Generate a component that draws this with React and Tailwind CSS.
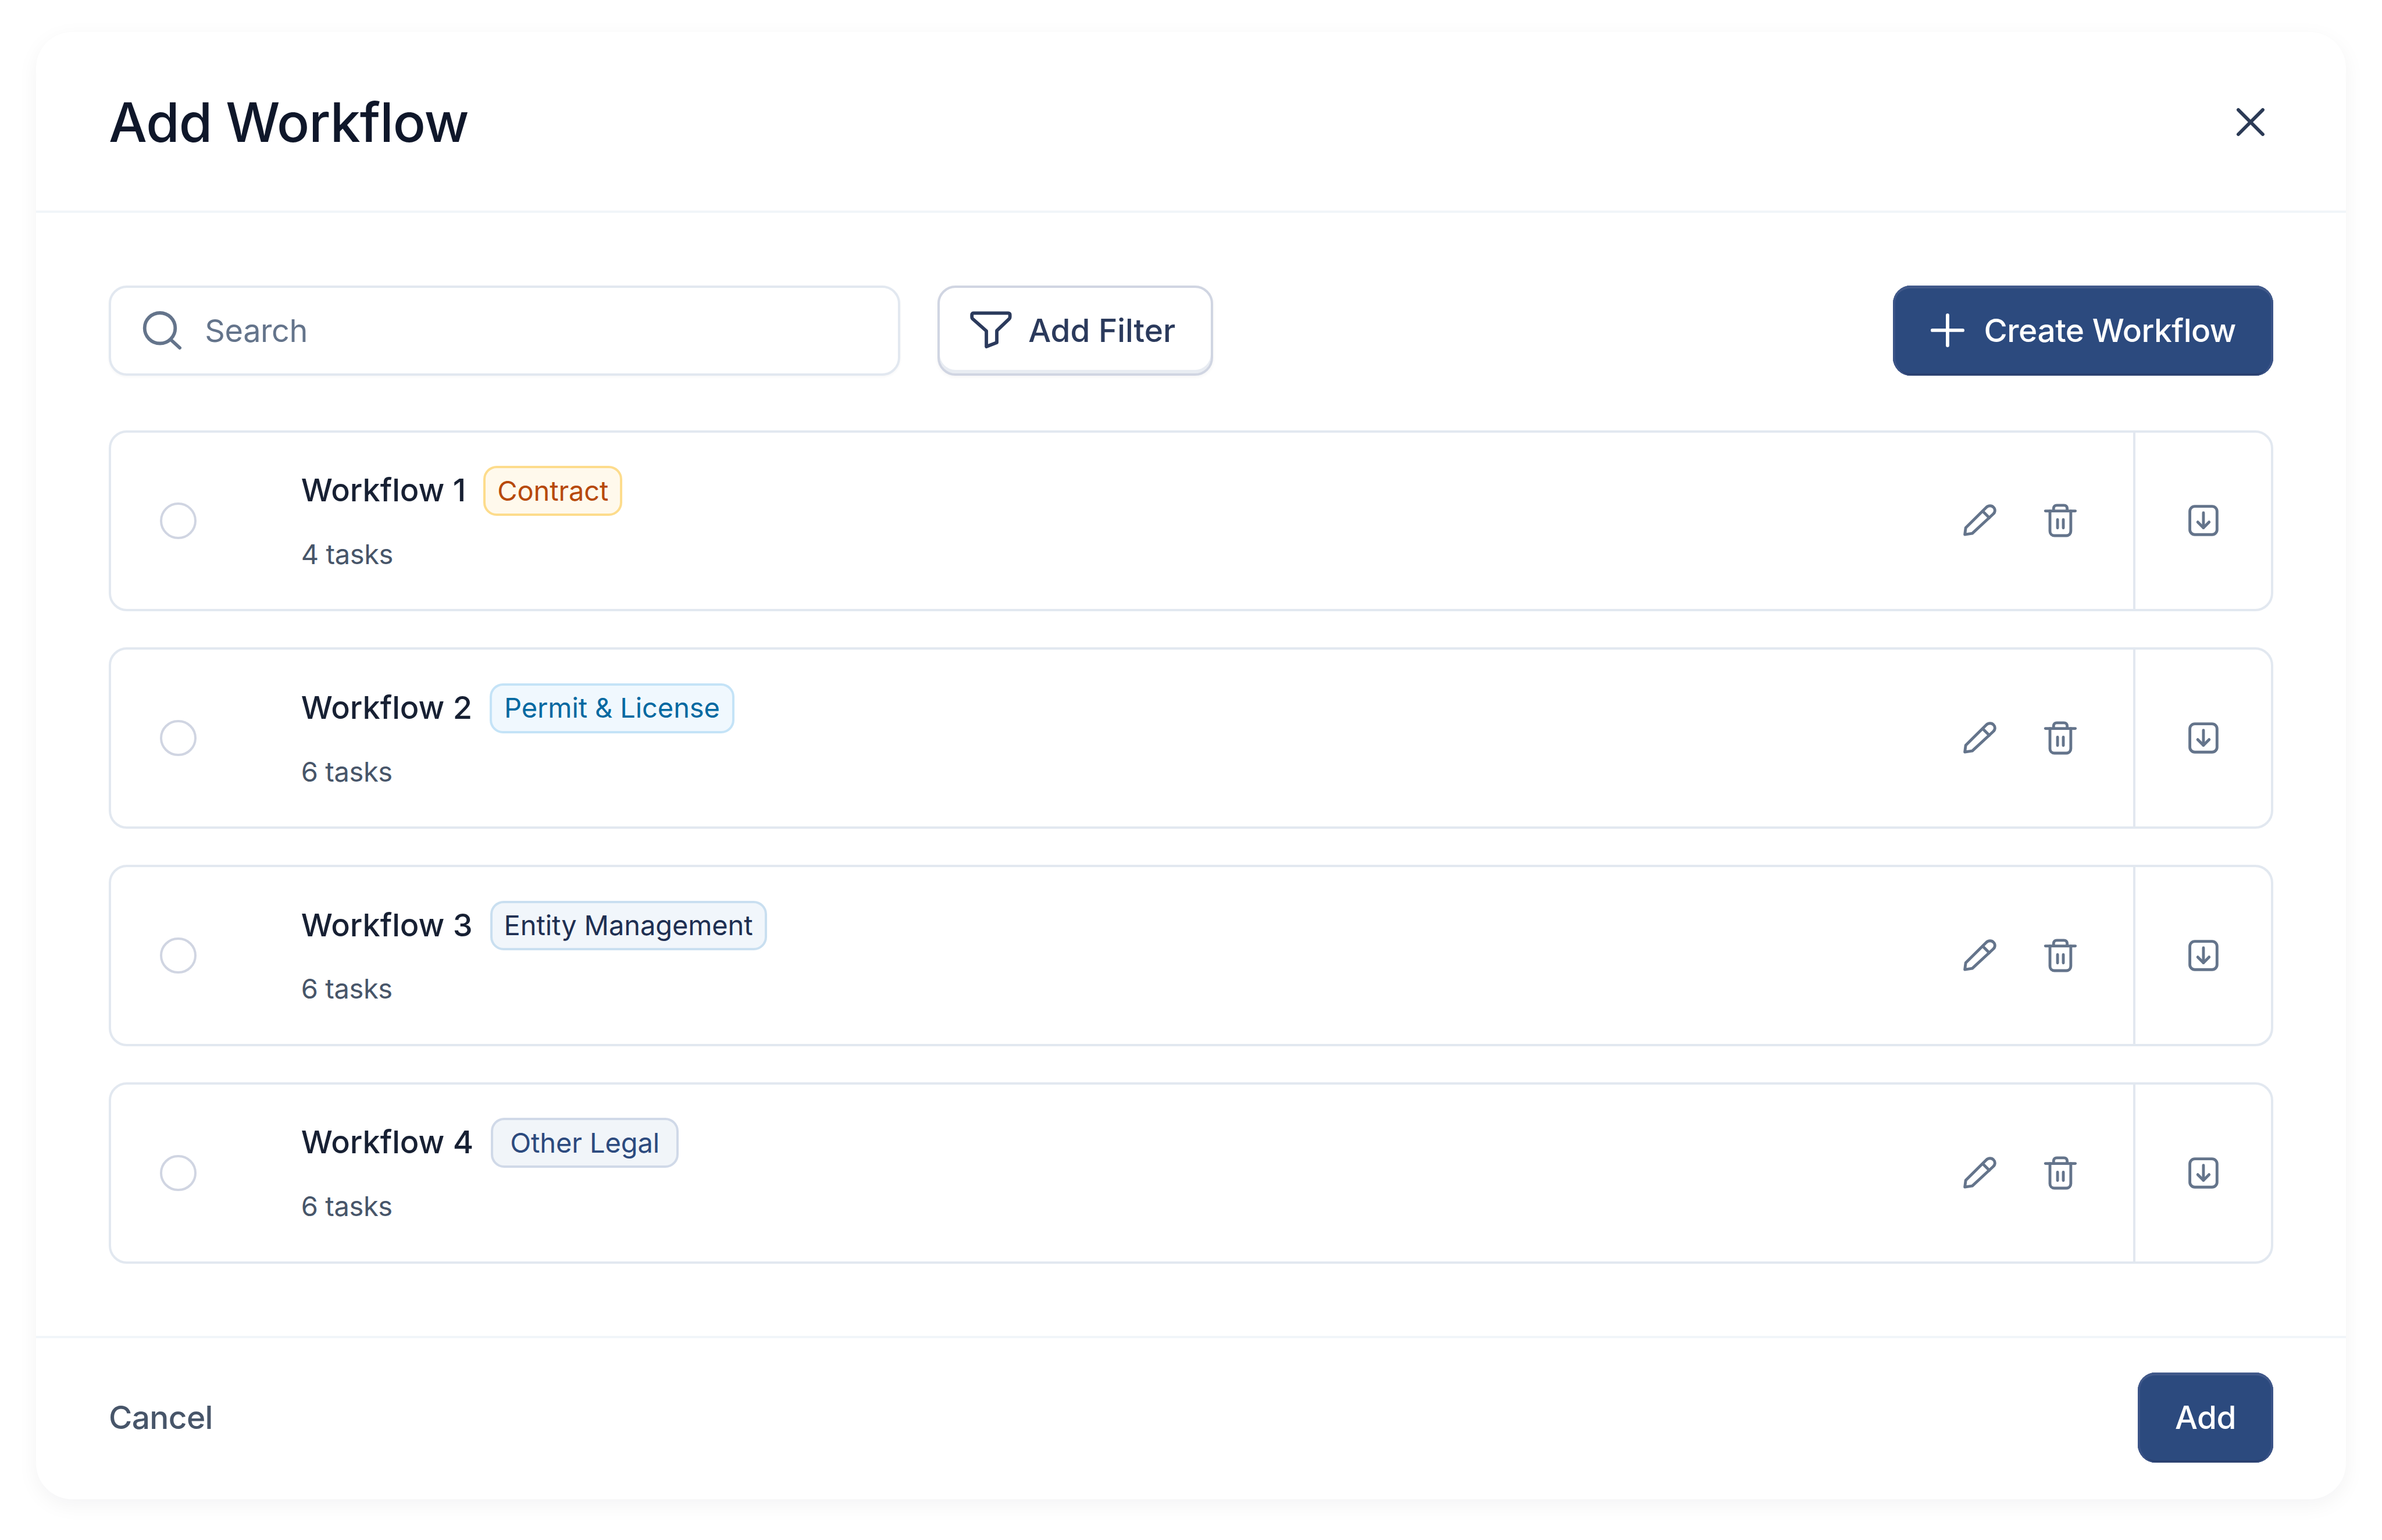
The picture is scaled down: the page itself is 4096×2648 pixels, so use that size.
import React from "react";

const rows = [
  {
    name: "Workflow 1",
    tasks: "4 tasks",
    tag: "Contract",
    tagClass: "px-[20px] bg-[#fff9ec] border-[#fddc8c] text-[#b7490a]",
  },
  {
    name: "Workflow 2",
    tasks: "6 tasks",
    tag: "Permit & License",
    tagClass: "px-[21px] bg-[#f0f8fe] border-[#c4e3f7] text-[#0369a1]",
  },
  {
    name: "Workflow 3",
    tasks: "6 tasks",
    tag: "Entity Management",
    tagClass: "px-[20px] bg-[#f1f6fb] border-[#c9dff0] text-[#1e2f52]",
  },
  {
    name: "Workflow 4",
    tasks: "6 tasks",
    tag: "Other Legal",
    tagClass: "px-[29px] bg-[#f1f5f9] border-[#d0d9e8] text-[#2c4a7e]",
  },
];

const Icon = ({ className, width = 1.25, children }) => (
  <svg
    viewBox="0 0 20 20"
    fill="none"
    stroke="currentColor"
    strokeWidth={width}
    strokeLinecap="round"
    strokeLinejoin="round"
    className={`w-[77.9px] h-[77.9px] shrink-0 ${className}`}
  >
    {children}
  </svg>
);

const WorkflowRow = ({ row }) => (
  <div className="flex h-[311.5px] items-center rounded-[31px] border-[4px] border-[#e2e8f0] bg-white">
    <div className="ml-[84.6px] h-[62.3px] w-[62.3px] shrink-0 rounded-full border-[4px] border-[#d0d5e2]" />
    <div className="ml-[180px] flex flex-1 flex-col">
      <div className="flex h-[85.7px] items-center gap-[30px]">
        <span className="mb-[3px] text-[54px] font-medium text-[#172033]">
          {row.name}
        </span>
        <span
          className={`flex h-[85.7px] items-center rounded-[23px] border-[4px] text-[47px] tracking-[-0.1px] ${row.tagClass}`}
        >
          {row.tag}
        </span>
      </div>
      <div className="mt-[25px] h-[78px] text-[47px] leading-[82px] tracking-[-0.4px] text-[#475569]">
        {row.tasks}
      </div>
    </div>
    <div className="flex items-center gap-[61px] pr-[86px] text-[#64748b]">
      <Icon>
        <path d="M3.5 16.2L3.9 13.2L12.9 4.3C13.9 3.3 15.4 3.3 16.2 4.2C17 5 17 6.3 16 7.2L6.8 15.7Z" />
        <path d="M11.4 5.9L14.3 8.8" />
      </Icon>
      <Icon>
        <path d="M3.4 5.8H16.6" />
        <path d="M7 5.8V4.7C7 3.8 7.6 3.3 8.4 3.3H11.6C12.4 3.3 13 3.8 13 4.7V5.8" />
        <path d="M5.4 5.8V14.7C5.4 15.9 6.2 16.7 7.4 16.7H12.6C13.8 16.7 14.6 15.9 14.6 14.7V5.8" />
        <path d="M8.75 9.6V13.3" />
        <path d="M11.3 9.6V13.3" />
      </Icon>
    </div>
    <div className="flex h-full w-[237.3px] shrink-0 items-center justify-center border-l-[4px] border-[#e2e8f0] text-[#64748b]">
      <Icon>
        <rect x="4" y="3.75" width="12" height="12.5" rx="2.2" />
        <path d="M10 6.6V13.2" />
        <path d="M7.5 10.7L10 13.2L12.5 10.7" />
      </Icon>
    </div>
  </div>
);

export default function App() {
  return (
    <div className="h-[2648px] w-[4096px] overflow-hidden bg-white pl-[62.3px] pt-[54.5px] font-[Inter,sans-serif]">
      <div className="flex h-[2523px] w-[3971.5px] flex-col rounded-[62px] bg-white shadow-[0_10px_36px_rgba(15,23,42,0.05)]">
        <div className="flex h-[311.5px] shrink-0 items-center justify-between border-b-[4px] border-[#f1f5f9] px-[124.6px] pt-[4px]">
          <h1 className="text-[93px] font-medium tracking-[-0.9px] text-[#0f172a]">
            Add Workflow
          </h1>
          <Icon width={1.5} className="text-[#2b3a55]">
            <path d="M4.6 4.6L15.4 15.4" />
            <path d="M15.4 4.6L4.6 15.4" />
          </Icon>
        </div>

        <div className="flex flex-1 flex-col px-[124.6px] pt-[124.6px]">
          <div className="flex h-[155.7px] items-center">
            <div className="flex h-full w-[1360.8px] items-center rounded-[31px] border-[4px] border-[#e2e8f0] pl-[48.5px] shadow-[0_2px_4px_rgba(15,23,42,0.04)]">
              <Icon width={1.5} className="text-[#64748b]">
                <circle cx="9.25" cy="9.05" r="6.75" />
                <path d="M14.2 14.3L18 17.75" />
              </Icon>
              <span className="ml-[35px] text-[54px] tracking-[-0.4px] text-[#64748b]">
                Search
              </span>
            </div>
            <button className="ml-[64.2px] flex h-full w-[474px] items-center rounded-[31px] border-[4px] border-[#d0d5e2] bg-white pl-[49.4px] text-[55px] font-medium tracking-[-0.1px] text-[#2b3a5c] shadow-[inset_0_-6px_0_#e8ecf2,0_2px_6px_rgba(15,23,42,0.05)]">
              <Icon width={1.5}>
                <path d="M2.4 2.4H17.7A.7 .7 0 0 1 18.4 3.1V4.2A1 1 0 0 1 18.1 4.9L12.6 10.2V15.4L8 17.2V10.3L1.9 4.9A1 1 0 0 1 1.6 4.2V3.1A.7 .7 0 0 1 2.4 2.4Z" />
              </Icon>
              <span className="ml-[25px]">Add Filter</span>
            </button>
            <button className="ml-auto flex h-full w-[654.1px] items-center rounded-[31px] bg-[#2c4a7e] pl-[54.5px] text-[55px] font-medium tracking-[-0.5px] text-white shadow-[inset_0_5px_0_#41598a,inset_4px_0_0_#3a5387,inset_-4px_0_0_#3a5387,inset_0_-4px_0_#2b4170]">
              <Icon width={1.5}>
                <path d="M10 3.3V16.7" />
                <path d="M3.3 10H16.7" />
              </Icon>
              <span className="ml-[24px]">Create Workflow</span>
            </button>
          </div>

          <div className="mt-[93.4px] flex flex-col gap-[62.3px]">
            {rows.map((row) => (
              <WorkflowRow key={row.name} row={row} />
            ))}
          </div>
        </div>

        <div className="flex h-[280.3px] shrink-0 items-start justify-between border-t-[4px] border-[#f1f5f9] px-[124.6px] pt-[58.4px]">
          <button className="flex h-[155.7px] items-center text-[55px] font-medium tracking-[-0.6px] text-[#475569]">
            Cancel
          </button>
          <button className="flex h-[155.7px] w-[233.6px] items-center justify-center rounded-[31px] bg-[#2c4a7e] text-[55px] font-medium tracking-[-0.5px] text-white shadow-[inset_0_5px_0_#41598a,inset_4px_0_0_#3a5387,inset_-4px_0_0_#3a5387,inset_0_-4px_0_#2b4170]">
            Add
          </button>
        </div>
      </div>
    </div>
  );
}
